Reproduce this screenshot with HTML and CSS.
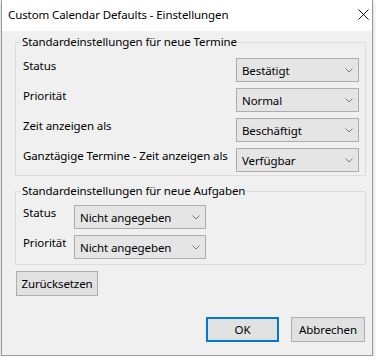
FILE: index.html
```html
<!DOCTYPE html>
<html lang="de">
<head>
    <meta charset="UTF-8">
    <title>Custom Calendar Defaults - Einstellungen</title>
    <link rel="stylesheet" href="styles.css">
</head>
<body>

    <div class="dialog">
        <div class="title-bar">
            <span class="title">Custom Calendar Defaults - Einstellungen</span>
            <svg class="close" width="11" height="11" viewBox="0 0 11 11">
                <path d="M0.5 0.5 L10.5 10.5 M10.5 0.5 L0.5 10.5" stroke="#111" stroke-width="1" fill="none"/>
            </svg>
        </div>

        <div class="content">
            <fieldset class="group group-appointments">
                <legend>Standardeinstellungen für neue Termine</legend>
                <div class="row">
                    <span class="label">Status</span>
                    <div class="combo wide"><span>Bestätigt</span><svg width="8" height="5" viewBox="0 0 8 5"><path d="M0.5 0.5 L4 4 L7.5 0.5" stroke="#7a7a7a" fill="none"/></svg></div>
                </div>
                <div class="row">
                    <span class="label">Priorität</span>
                    <div class="combo wide"><span>Normal</span><svg width="8" height="5" viewBox="0 0 8 5"><path d="M0.5 0.5 L4 4 L7.5 0.5" stroke="#7a7a7a" fill="none"/></svg></div>
                </div>
                <div class="row">
                    <span class="label">Zeit anzeigen als</span>
                    <div class="combo wide"><span>Beschäftigt</span><svg width="8" height="5" viewBox="0 0 8 5"><path d="M0.5 0.5 L4 4 L7.5 0.5" stroke="#7a7a7a" fill="none"/></svg></div>
                </div>
                <div class="row">
                    <span class="label">Ganztägige Termine - Zeit anzeigen als</span>
                    <div class="combo wide"><span>Verfügbar</span><svg width="8" height="5" viewBox="0 0 8 5"><path d="M0.5 0.5 L4 4 L7.5 0.5" stroke="#7a7a7a" fill="none"/></svg></div>
                </div>
            </fieldset>

            <fieldset class="group group-tasks">
                <legend>Standardeinstellungen für neue Aufgaben</legend>
                <div class="row">
                    <span class="label short">Status</span>
                    <div class="combo narrow"><span>Nicht angegeben</span><svg width="8" height="5" viewBox="0 0 8 5"><path d="M0.5 0.5 L4 4 L7.5 0.5" stroke="#7a7a7a" fill="none"/></svg></div>
                </div>
                <div class="row">
                    <span class="label short">Priorität</span>
                    <div class="combo narrow"><span>Nicht angegeben</span><svg width="8" height="5" viewBox="0 0 8 5"><path d="M0.5 0.5 L4 4 L7.5 0.5" stroke="#7a7a7a" fill="none"/></svg></div>
                </div>
            </fieldset>

            <button type="button" class="btn reset">Zurücksetzen</button>

            <div class="actions">
                <button type="button" class="btn ok">OK</button>
                <button type="button" class="btn cancel">Abbrechen</button>
            </div>
        </div>
    </div>

</body>
</html>
```

FILE: styles.css
```css
body {
    font-family: 'Noto Sans', sans-serif;
    font-size: 11.5px;
    letter-spacing: -0.1px;
    color: #000;
    background-color: #fff;
    margin: 0;
    padding: 0;
}

.dialog {
    width: 372px;
    height: 356px;
    margin-left: 1px;
    background-color: #f0f0f0;
    border: 1px solid #9a9a9a;
    border-top: none;
    box-sizing: border-box;
    box-shadow: 0 2px 4px rgba(0, 0, 0, 0.25);
    display: flex;
    flex-direction: column;
}

.title-bar {
    height: 31px;
    background-color: #fff;
    display: flex;
    align-items: center;
    justify-content: space-between;
    padding: 0 3px 2px 6px;
    box-sizing: border-box;
}

.title {
    font-size: 11.5px;
}

.content {
    flex: 1;
    padding: 3px 6px 0 13px;
    display: flex;
    flex-direction: column;
}

.group {
    margin: 0;
    min-width: 0;
    border: 1px solid #dcdcdc;
    padding: 8px 6px 3px 7px;
    display: flex;
    flex-direction: column;
    gap: 6px;
}

.group legend {
    padding: 0 1px;
    margin-left: -2px;
    line-height: 16px;
}

.group-tasks {
    margin-top: 7px;
    padding-top: 6px;
    padding-bottom: 5px;
}

.row {
    display: flex;
    align-items: flex-start;
    justify-content: space-between;
}

.group-tasks .row {
    justify-content: flex-start;
}

.label {
    line-height: 16px;
    white-space: nowrap;
}

.label.short {
    width: 51px;
}

.combo {
    height: 24px;
    flex-shrink: 0;
    background-color: #e5e5e5;
    border: 1px solid #acacac;
    box-sizing: border-box;
    display: flex;
    align-items: center;
    justify-content: space-between;
    padding: 0 5px 0 5px;
    white-space: nowrap;
}

.combo.wide {
    width: 123px;
}

.combo.narrow {
    width: 132px;
}

.btn {
    font-family: 'Noto Sans', sans-serif;
    font-size: 11.5px;
    letter-spacing: -0.1px;
    color: #000;
    background-color: #e1e1e1;
    border: 1px solid #adadad;
    height: 25px;
    padding: 0;
    box-sizing: border-box;
}

.reset {
    width: 82px;
    margin-top: 6px;
    margin-left: 1px;
    align-self: flex-start;
}

.actions {
    display: flex;
    justify-content: flex-end;
    gap: 12px;
    margin-top: 21px;
    padding-right: 1px;
}

.ok {
    width: 73px;
    border: 2px solid #0078d7;
}

.cancel {
    width: 74px;
}
```
